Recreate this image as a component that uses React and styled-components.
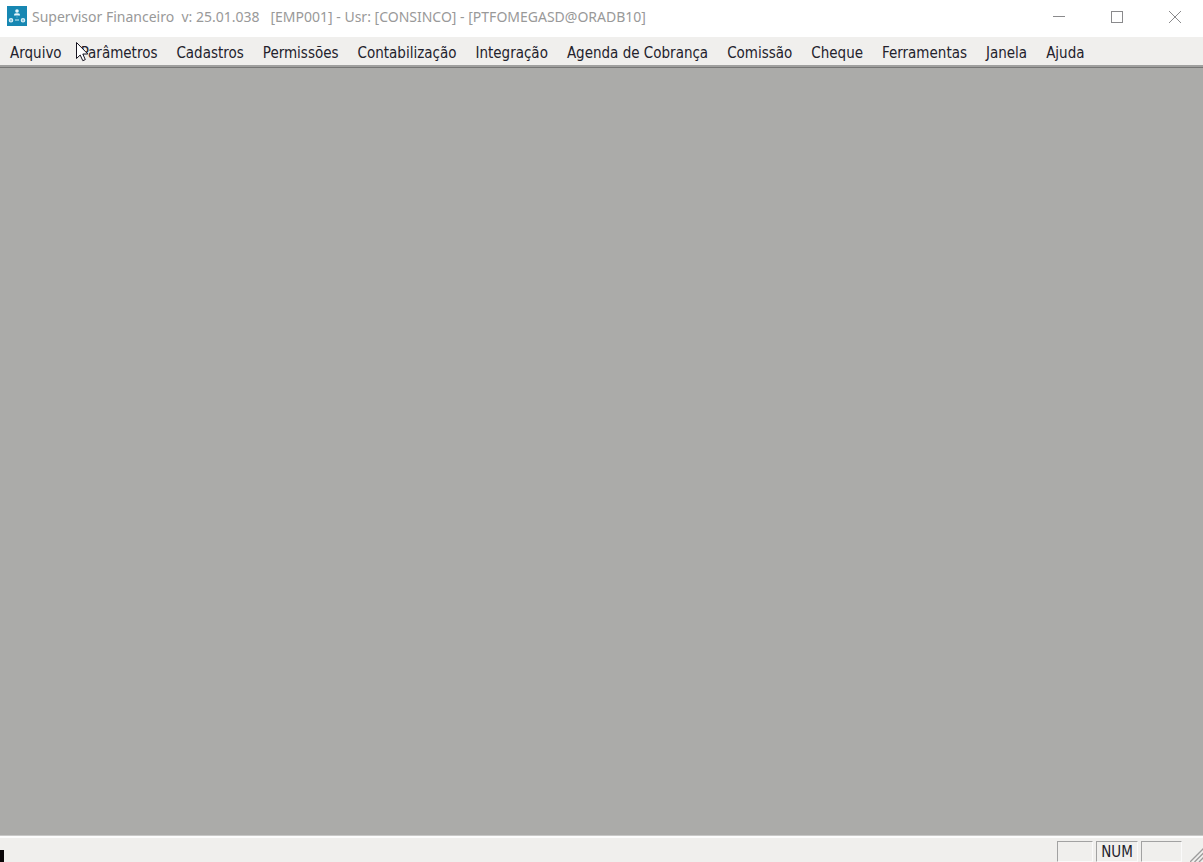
import React from "react";
import styled, { createGlobalStyle } from "styled-components";

const GlobalStyle = createGlobalStyle`
  * {
    box-sizing: border-box;
  }

  body {
    margin: 0;
    overflow: hidden;
  }
`;

const Window = styled.div`
  display: flex;
  flex-direction: column;
  height: 100vh;
  background: #ababa9;
  user-select: none;
`;

const TitleBar = styled.header`
  display: flex;
  align-items: center;
  height: 37px;
  padding: 0 0 5px 7px;
  background: #ffffff;
`;

const Title = styled.h1`
  flex: 1;
  margin: 0 0 0 5px;
  padding-top: 2px;
  font: 400 14px/20px "Noto Sans", "Open Sans", sans-serif;
  color: #999999;
  white-space: pre;
`;

const WindowButton = styled.button`
  display: flex;
  align-items: center;
  justify-content: center;
  width: 58px;
  height: 32px;
  padding: 2px 0 0 2px;
  border: none;
  background: transparent;
  color: #8a8a8c;
`;

const MenuBar = styled.nav`
  display: flex;
  align-items: center;
  height: 28px;
  padding-left: 1px;
  background: #f0efed;
`;

const MenuItem = styled.button`
  height: 28px;
  padding: 3px 10px 0 9px;
  border: none;
  background: transparent;
  font: 15px/20px "DejaVu Sans Condensed", Tahoma, sans-serif;
  color: #23222c;
  white-space: nowrap;
`;

const Workspace = styled.main`
  flex: 1;
  border-top: 2px solid #a0a09f;
  border-bottom: 1px solid #c8c8c7;
  box-shadow: inset 0 1px 0 #777776;
`;

const StatusBar = styled.footer`
  display: flex;
  align-items: flex-end;
  height: 26px;
  border-top: 2px solid #fcfcfc;
  background: #f0efed;
`;

const Caret = styled.span`
  width: 4px;
  height: 12px;
  margin-right: auto;
  background: #0a0608;
`;

const StatusCell = styled.span`
  width: ${({ $width }) => $width}px;
  height: 21px;
  margin-right: 3px;
  border: 1px solid #a2a2a2;
  border-right-color: #fafafa;
  border-bottom-color: #fafafa;
  font: 15px/20px "DejaVu Sans Condensed", Tahoma, sans-serif;
  color: #23222c;
  text-align: center;
`;

const Grip = styled.svg`
  display: block;
  margin-left: 5px;
`;

const Pointer = styled.svg`
  position: absolute;
  top: 42px;
  left: 76px;
  pointer-events: none;
`;

const menus = [
  "Arquivo",
  "Parâmetros",
  "Cadastros",
  "Permissões",
  "Contabilização",
  "Integração",
  "Agenda de Cobrança",
  "Comissão",
  "Cheque",
  "Ferramentas",
  "Janela",
  "Ajuda",
];

const statusCells = [
  { id: "caps", label: "", width: 36 },
  { id: "num", label: "NUM", width: 42 },
  { id: "scroll", label: "", width: 41 },
];

const AppIcon = () => (
  <svg width="20" height="20" viewBox="0 0 20 20" aria-hidden="true">
    <rect width="20" height="20" fill="#1787b2" />
    <circle cx="10" cy="5" r="1.8" fill="#e9f6fb" />
    <path d="M7 9.5V8.4Q7 7.2 10 7.2T13 8.4V9.5Z" fill="#e9f6fb" />
    <path d="M10 9.5V12" stroke="#4aa4c5" strokeWidth="1" />
    <circle cx="4" cy="14.3" r="1.7" fill="#7fbfd7" stroke="#d7edf5" strokeWidth="1.2" />
    <circle cx="16" cy="14.3" r="1.7" fill="#7fbfd7" stroke="#d7edf5" strokeWidth="1.2" />
    <rect x="8" y="13" width="4" height="2" fill="#75bad3" />
  </svg>
);

const App = () => {
  return (
    <Window>
      <GlobalStyle />
      <TitleBar>
        <AppIcon />
        <Title>
          {"Supervisor Financeiro  v: 25.01.038   [EMP001] - Usr: [CONSINCO] - [PTFOMEGASD@ORADB10]"}
        </Title>
        <WindowButton aria-label="Minimizar">
          <svg width="12" height="12" fill="none" stroke="currentColor">
            <path d="M0 5.5H12" />
          </svg>
        </WindowButton>
        <WindowButton aria-label="Maximizar">
          <svg width="12" height="12" fill="none" stroke="currentColor">
            <rect x="0.5" y="0.5" width="11" height="11" />
          </svg>
        </WindowButton>
        <WindowButton aria-label="Fechar">
          <svg width="12" height="12" fill="none" stroke="currentColor">
            <path d="M0 0L12 12M12 0L0 12" />
          </svg>
        </WindowButton>
      </TitleBar>

      <MenuBar>
        {menus.map((menu) => (
          <MenuItem key={menu}>{menu}</MenuItem>
        ))}
      </MenuBar>

      <Workspace />

      <StatusBar>
        <Caret />
        {statusCells.map(({ id, label, width }) => (
          <StatusCell key={id} $width={width}>
            {label}
          </StatusCell>
        ))}
        <Grip width="13" height="14" fill="none" stroke="#9c9c9c" strokeWidth="1.4">
          <path d="M0 14L14 0M4.5 14L14 4.5M9 14L14 9" />
        </Grip>
      </StatusBar>

      <Pointer width="13" height="20" viewBox="0 0 13 20" aria-hidden="true">
        <path
          d="M0.5 0.5V16.5L4.2 13L6.8 18.7L9.3 17.6L6.8 12H11.8Z"
          fill="#ffffff"
          stroke="#16131f"
        />
      </Pointer>
    </Window>
  );
};

export default App;
